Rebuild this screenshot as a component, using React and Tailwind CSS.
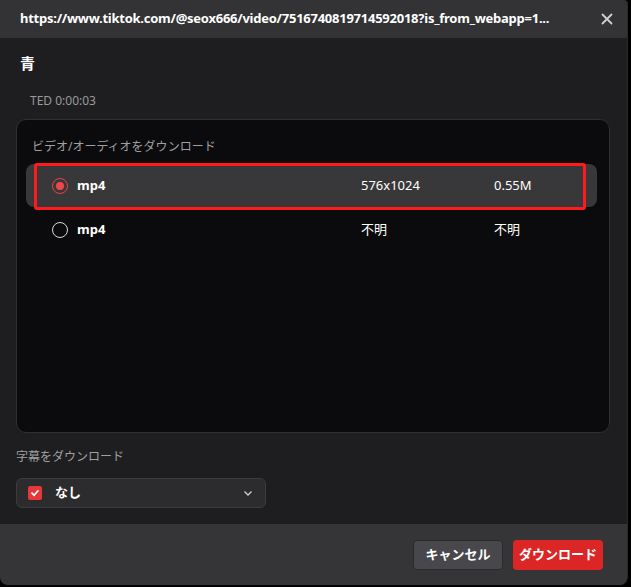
import React from "react";

const font = { fontFamily: '"Noto Sans", "Noto Sans CJK JP", sans-serif' };

export default function App() {
  return (
    <div className="w-[631px] h-[587px] bg-black" style={font}>
      <div className="w-[628px] h-[585px] flex flex-col bg-[#1e1e20] rounded-b-[8px] rounded-tr-[4px] overflow-hidden border-r border-[#2a2a2c]">
        <div className="h-[38px] shrink-0 bg-[#333335] flex items-center justify-between pl-[20px] pr-[14px]">
          <span className="text-white text-[13px] font-bold tracking-[-0.25px]">https://www.tiktok.com/@seox666/video/7516740819714592018?is_from_webapp=1...</span>
          <svg width="12" height="12" viewBox="0 0 12 12" className="text-[#d0d0d0]">
            <path d="M1.5 1.5 L10.5 10.5 M10.5 1.5 L1.5 10.5" stroke="currentColor" strokeWidth="1.8" strokeLinecap="round" />
          </svg>
        </div>
        <div className="flex-1 flex flex-col px-[16px]">
          <div className="text-white text-[15px] font-bold pl-[4px] pt-[14px] leading-[22px]">青</div>
          <div className="text-[#9a9a9c] text-[12px] pl-[14px] pt-[18px] leading-[18px]">TED 0:00:03</div>
          <div className="mt-[9px] h-[314px] mr-[1px] bg-[#0b0b0d] border border-[#303032] rounded-[10px] flex flex-col pl-[9px] pr-[12px]">
            <div className="text-[#a0a0a2] text-[12px] pl-[6px] pt-[18px] leading-[18px]">ビデオ/オーディオをダウンロード</div>
            <div className="relative mt-[8px] h-[43px] bg-[#38383a] rounded-[8px] flex items-center text-white text-[13px]">
              <div className="w-[16px] h-[16px] ml-[26px] rounded-full border border-[#e04545] flex items-center justify-center">
                <div className="w-[8px] h-[8px] rounded-full bg-[#f04848]" />
              </div>
              <span className="ml-[9px] w-[284px] font-bold">mp4</span>
              <span className="w-[133px] font-normal">576x1024</span>
              <span className="font-normal">0.55M</span>
              <div className="absolute left-[8px] top-[-1px] w-[552px] h-[47px] border-[3px] border-[#ff1b1b] rounded-[3px]" />
            </div>
            <div className="h-[46px] flex items-center text-white text-[13px]">
              <div className="w-[16px] h-[16px] ml-[26px] rounded-full border border-[#d8d8d8]" />
              <span className="ml-[9px] w-[284px] font-bold">mp4</span>
              <span className="w-[133px]">不明</span>
              <span>不明</span>
            </div>
          </div>
          <div className="text-[#a0a0a2] text-[12px] pt-[15px] leading-[18px]">字幕をダウンロード</div>
          <div className="mt-[12px] w-[250px] h-[30px] bg-[#2c2c2e] border border-[#3c3c3e] rounded-[6px] flex items-center pl-[11px] pr-[12px]">
            <div className="w-[14px] h-[14px] bg-[#e5383b] rounded-[2px] flex items-center justify-center">
              <svg width="10" height="10" viewBox="0 0 10 10">
                <path d="M2 5.2 L4.2 7.3 L8 2.8" stroke="white" strokeWidth="1.7" fill="none" strokeLinecap="round" strokeLinejoin="round" />
              </svg>
            </div>
            <span className="ml-[13px] text-white text-[13px] font-bold flex-1">なし</span>
            <svg width="10" height="10" viewBox="0 0 10 10">
              <path d="M1.5 3.5 L5 7 L8.5 3.5" stroke="#d0d0d0" strokeWidth="1.3" fill="none" />
            </svg>
          </div>
        </div>
        <div className="h-[61px] shrink-0 bg-[#353537] flex items-center justify-end gap-[10px] pr-[24px] pt-[1px]">
          <button className="w-[90px] h-[30px] bg-[#48484c] border border-[#2a2a2c] rounded-[4px] text-white text-[13px] font-bold">キャンセル</button>
          <button className="w-[90px] h-[30px] bg-[#dc2626] rounded-[4px] text-white text-[13px] font-bold">ダウンロード</button>
        </div>
      </div>
    </div>
  );
}
